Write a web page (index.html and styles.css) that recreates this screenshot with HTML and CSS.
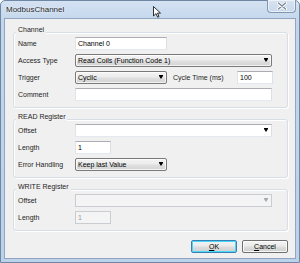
FILE: index.html
```html
<!DOCTYPE html>
<html>
<head>
<meta charset="utf-8">
<link rel="stylesheet" href="styles.css">
</head>
<body>
<div class="window">
  <div class="titlebar">
    <span class="title">ModbusChannel</span>
    <div class="close">
      <svg width="10" height="8" viewBox="0 0 10 8"><path d="M1.5 1 L8.5 7 M8.5 1 L1.5 7" stroke="#fff" stroke-width="3" stroke-linecap="round"/><path d="M1.5 1 L8.5 7 M8.5 1 L1.5 7" stroke="#7c8797" stroke-width="1.4" stroke-linecap="round"/></svg>
    </div>
  </div>
  <div class="client">
    <div class="group">
      <div class="group-title">Channel</div>
      <div class="rows">
        <div class="row"><span class="lbl">Name</span><div class="input w92">Channel 0</div></div>
        <div class="row"><span class="lbl">Access Type</span><div class="combo w197"><span>Read Coils (Function Code 1)</span><i class="arrow"></i></div></div>
        <div class="row"><span class="lbl">Trigger</span><div class="combo w92"><span>Cyclic</span><i class="arrow"></i></div><span class="lbl2">Cycle Time (ms)</span><div class="input w36">100</div></div>
        <div class="row"><span class="lbl">Comment</span><div class="input w197"></div></div>
      </div>
    </div>
    <div class="group">
      <div class="group-title">READ Register</div>
      <div class="rows">
        <div class="row"><span class="lbl">Offset</span><div class="input edit-combo w197"><span></span><i class="arrow"></i></div></div>
        <div class="row"><span class="lbl">Length</span><div class="input w36">1</div></div>
        <div class="row"><span class="lbl">Error Handling</span><div class="combo w92"><span>Keep last Value</span><i class="arrow"></i></div></div>
      </div>
    </div>
    <div class="group">
      <div class="group-title">WRITE Register</div>
      <div class="rows">
        <div class="row"><span class="lbl">Offset</span><div class="input edit-combo disabled w197"><span></span><i class="arrow"></i></div></div>
        <div class="row"><span class="lbl">Length</span><div class="input disabled w36">1</div></div>
      </div>
    </div>
    <div class="buttons">
      <div class="btn default"><u>O</u>K</div>
      <div class="btn"><u>C</u>ancel</div>
    </div>
  </div>
  <svg class="cursor" width="8" height="12" viewBox="0 0 8 12"><path d="M0.5 0.5 L0.5 10 L3 7.6 L4.6 11.2 L6 10.6 L4.5 7.1 L7.5 7.1 Z" fill="#fff" stroke="#000" stroke-width="0.8" stroke-linejoin="round"/></svg>
</div>
</body>
</html>
```
FILE: styles.css
```css
* { box-sizing: border-box; }
html, body { margin: 0; padding: 0; }
body {
  width: 300px;
  height: 263px;
  overflow: hidden;
  background: #ffffff;
  font-family: "Liberation Sans", Arial, sans-serif;
  font-size: 7px;
  color: #1e1e1e;
}
.window {
  position: relative;
  width: 300px;
  height: 263px;
  border: 1px solid #6f87a5;
  border-radius: 5px 5px 0 0;
  background: linear-gradient(180deg, #d4e2f2 0%, #c3d6ec 8%, #bcd1ea 100%);
  padding: 0 3px 3px 3px;
  display: flex;
  flex-direction: column;
}
.titlebar {
  height: 17px;
  display: flex;
  align-items: flex-start;
  justify-content: space-between;
}
.title {
  font-size: 8px;
  line-height: 17px;
  padding-left: 2px;
  color: #2a2a2a;
  text-shadow: 0 0 3px #ffffff;
}
.close {
  width: 29px;
  height: 13px;
  margin-top: -1px;
  border: 1px solid #8497b0;
  border-top: none;
  border-radius: 0 0 4px 4px;
  background: linear-gradient(180deg, #d7e3f1 0%, #c9d9ec 100%);
  box-shadow: inset 0 0 0 1px rgba(255,255,255,0.55);
  display: flex;
  align-items: center;
  justify-content: center;
}
.close svg { display: block; }
.client {
  flex: 1;
  border: 1px solid #8fa5c0;
  background: #f0f0f0;
  padding: 0 7px 0 8px;
  display: flex;
  flex-direction: column;
}
.group {
  border: 1px solid #d5dfe5;
  border-radius: 3px;
  box-shadow: inset 1px 1px 0 #ffffff, 1px 1px 0 #ffffff;
  padding: 0 15px 6px 4px;
  margin-top: 11px;
}
.group:first-child { margin-top: 13px; }
.group-title {
  width: fit-content;
  margin: -7px 0 0 -2px;
  padding: 0 2px;
  line-height: 8px;
  background: #f0f0f0;
  color: #1e1e1e;
}
.rows {
  margin-top: 3px;
  display: flex;
  flex-direction: column;
  gap: 4px;
}
.row {
  display: flex;
  align-items: center;
  height: 13px;
}
.lbl {
  width: 57px;
  flex: none;
}
.lbl2 {
  margin-left: 6px;
  width: 64px;
  flex: none;
}
.w92 { width: 92px; }
.w197 { width: 197px; }
.w36 { width: 36px; }
.input {
  height: 13px;
  border: 1px solid;
  border-color: #abadb3 #dbdfe6 #e3e9ef #e2e3ea;
  background: #ffffff;
  padding-left: 2px;
  line-height: 11px;
  color: #000;
  white-space: nowrap;
  flex: none;
}
.combo {
  height: 13px;
  border: 1px solid #7a7a7a;
  border-radius: 2px;
  background: linear-gradient(180deg, #f4f4f4 0%, #ececec 45%, #dfdfdf 55%, #d3d3d3 100%);
  box-shadow: inset 0 0 0 1px rgba(255,255,255,0.7);
  padding-left: 2px;
  line-height: 11px;
  color: #000;
  display: flex;
  align-items: center;
  justify-content: space-between;
  white-space: nowrap;
  flex: none;
}
.edit-combo {
  display: flex;
  align-items: center;
  justify-content: space-between;
}
.arrow {
  display: block;
  width: 0;
  height: 0;
  margin-right: 3px;
  border-left: 2.5px solid transparent;
  border-right: 2.5px solid transparent;
  border-top: 3px solid #000;
  box-shadow: 0 -1px 0 0 #000;
}
.input.disabled {
  background: #f4f4f4;
  border-color: #c9cdd1;
  color: #9a9a9a;
}
.disabled .arrow {
  border-top-color: #a8a8a8;
  box-shadow: 0 -1px 0 0 #a8a8a8;
}
.buttons {
  margin-top: 9px;
  display: flex;
  justify-content: flex-end;
  gap: 5px;
}
.btn {
  width: 46px;
  height: 13px;
  border: 1px solid #707070;
  border-radius: 2px;
  background: linear-gradient(180deg, #f3f3f3 0%, #ebebeb 45%, #dddddd 55%, #cfcfcf 100%);
  box-shadow: inset 0 0 0 1px rgba(255,255,255,0.8);
  text-align: center;
  line-height: 11px;
  color: #000;
}
.btn.default {
  border-color: #3c7fb1;
  box-shadow: inset 0 0 0 1px #48d8fb;
}
.cursor {
  position: absolute;
  left: 152px;
  top: 5px;
}
```
